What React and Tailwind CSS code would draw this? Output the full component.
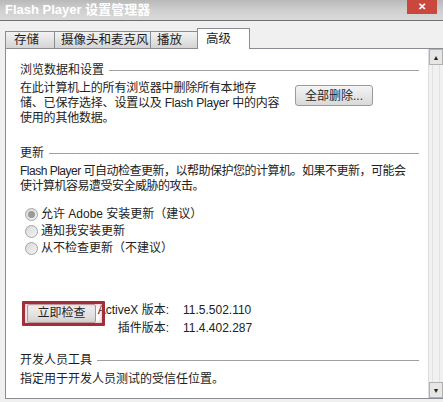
import React from 'react';

const font = { fontFamily: '"Liberation Sans", "Noto Sans CJK SC", sans-serif' };

const SectionTitle = ({ children, className = '' }) => (
  <div className={`flex items-center h-[15px] ${className}`}>
    <span className="text-[12px] leading-[15px] text-[#1e1e1e]">{children}</span>
    <div className="flex-1 ml-[5px] border-t border-[#a0a0a0]" />
  </div>
);

const Radio = ({ checked, label }) => (
  <div className="flex items-center h-[17px]">
    <span className="w-[13px] h-[13px] rounded-full border border-[#a4a4a4] bg-gradient-to-br from-[#d8d8d8] to-[#f4f4f4] flex items-center justify-center">
      {checked && <span className="w-[7px] h-[7px] rounded-full bg-[#9a9a9a]" />}
    </span>
    <span className="ml-[3px] text-[12px] leading-[15px] text-[#222]">{label}</span>
  </div>
);

const Tab = ({ label, active, className = '' }) => (
  <div
    className={
      active
        ? `h-[21px] bg-white border border-b-0 border-[#8a8c94] text-[12.5px] leading-[20px] text-[#1e1e1e] -mb-px relative z-10 ${className}`
        : `h-[17px] bg-gradient-to-b from-[#f3f3f3] to-[#d4d4d4] border border-b-0 border-r-0 border-[#8a8c94] text-[12.5px] leading-[16px] text-[#1e1e1e] ${className}`
    }
  >
    {label}
  </div>
);

const Arrow = ({ up }) => (
  <div className="h-[16px] shrink-0 bg-[#e6e6e6] border border-[#b0b0b0] flex items-center justify-center">
    <span className="text-[7px] leading-[7px] text-[#222]">{up ? '▲' : '▼'}</span>
  </div>
);

export default function App() {
  return (
    <div className="w-[443px] h-[402px] bg-[#f0f0f0] overflow-hidden flex flex-col" style={font}>
      {/* title bar */}
      <div className="h-[21px] shrink-0 flex items-start bg-gradient-to-b from-[#b9b9b9] via-[#cfcfcf] to-[#dadada] border-b border-[#707070]">
        <span className="ml-[5px] mt-[2px] text-[13px] leading-[16px] font-bold text-white">
          Flash Player 设置管理器
        </span>
        <span className="ml-auto mr-[6px] shrink-0 w-[30px] h-[14px] bg-[#c9473c] text-white text-[10px] leading-[14px] font-bold text-center">
          ✕
        </span>
      </div>

      {/* tabs */}
      <div className="h-[27px] shrink-0 flex items-end pl-[5px]">
        <Tab label="存储" className="w-[49px] pl-[8px]" />
        <Tab label="摄像头和麦克风" className="w-[96px] pl-[6px]" />
        <Tab label="播放" className="w-[47px] pl-[6px]" />
        <Tab label="高级" active className="w-[53px] pl-[8px]" />
      </div>

      {/* panel */}
      <div className="flex-1 flex ml-[5px] mb-[3px] border-l border-t border-b border-[#8a8c94] bg-white">
        <div className="flex-1 min-w-0 pl-[14px] pr-[9px] pt-[14px]">
          <SectionTitle>浏览数据和设置</SectionTitle>
          <div className="flex items-start mt-[3px]">
            <p className="w-[262px] shrink-0 text-[12px] leading-[15px] text-[#222] whitespace-nowrap tracking-[-0.2px]">
              在此计算机上的所有浏览器中删除所有本地存<br />
              储、已保存选择、设置以及 Flash Player 中的内容<br />
              使用的其他数据。
            </p>
            <button className="ml-[13px] mt-[4px] w-[78px] h-[21px] shrink-0 rounded-[3px] border border-[#9a9a9a] bg-gradient-to-b from-[#f4f4f4] to-[#d9d9d9] text-[12px] text-[#1e1e1e]">
              全部删除...
            </button>
          </div>

          <SectionTitle className="mt-[20px]">更新</SectionTitle>
          <p className="mt-[3px] text-[12px] leading-[15px] text-[#222] whitespace-nowrap tracking-[-0.5px]">
            Flash Player 可自动检查更新，以帮助保护您的计算机。如果不更新，可能会<br />
            使计算机容易遭受安全威胁的攻击。
          </p>

          <div className="mt-[12px] pl-[5px] flex flex-col">
            <Radio checked label="允许 Adobe 安装更新（建议）" />
            <Radio label="通知我安装更新" />
            <Radio label="从不检查更新（不建议）" />
          </div>

          <div className="mt-[44px] flex items-start relative">
            <button className="ml-[7px] mt-[3px] w-[69px] h-[19px] shrink-0 rounded-[2px] border border-[#9a9a9a] bg-gradient-to-b from-[#f2f2f2] to-[#d6d6d6] text-[12px] leading-[17px] text-[#1e1e1e]">
              立即检查
            </button>
            <div className="-ml-[4px] grid grid-cols-[77px_auto] gap-x-[14px] text-[12px] leading-[18px] text-[#222]">
              <span className="text-right">ActiveX 版本:</span>
              <span>11.5.502.110</span>
              <span className="text-right">插件版本:</span>
              <span>11.4.402.287</span>
            </div>
            {/* red highlight annotation */}
            <div className="absolute left-[2px] top-0 w-[83px] h-[25px] border-[3px] border-[#a12f3a] rounded-[1px] shadow-[inset_0_0_4px_#e8a0a8]" />
          </div>

          <SectionTitle className="mt-[16px]">开发人员工具</SectionTitle>
          <p className="mt-[4px] text-[12px] leading-[15px] text-[#222]">指定用于开发人员测试的受信任位置。</p>
        </div>

        {/* scrollbar */}
        <div className="w-[15px] shrink-0 flex flex-col bg-[#f1f1f1] border-l border-[#dcdcdc]">
          <Arrow up />
          <div className="flex-1 mx-[3px] border-x border-[#e2e2e2]" />
          <Arrow />
        </div>
      </div>
    </div>
  );
}
